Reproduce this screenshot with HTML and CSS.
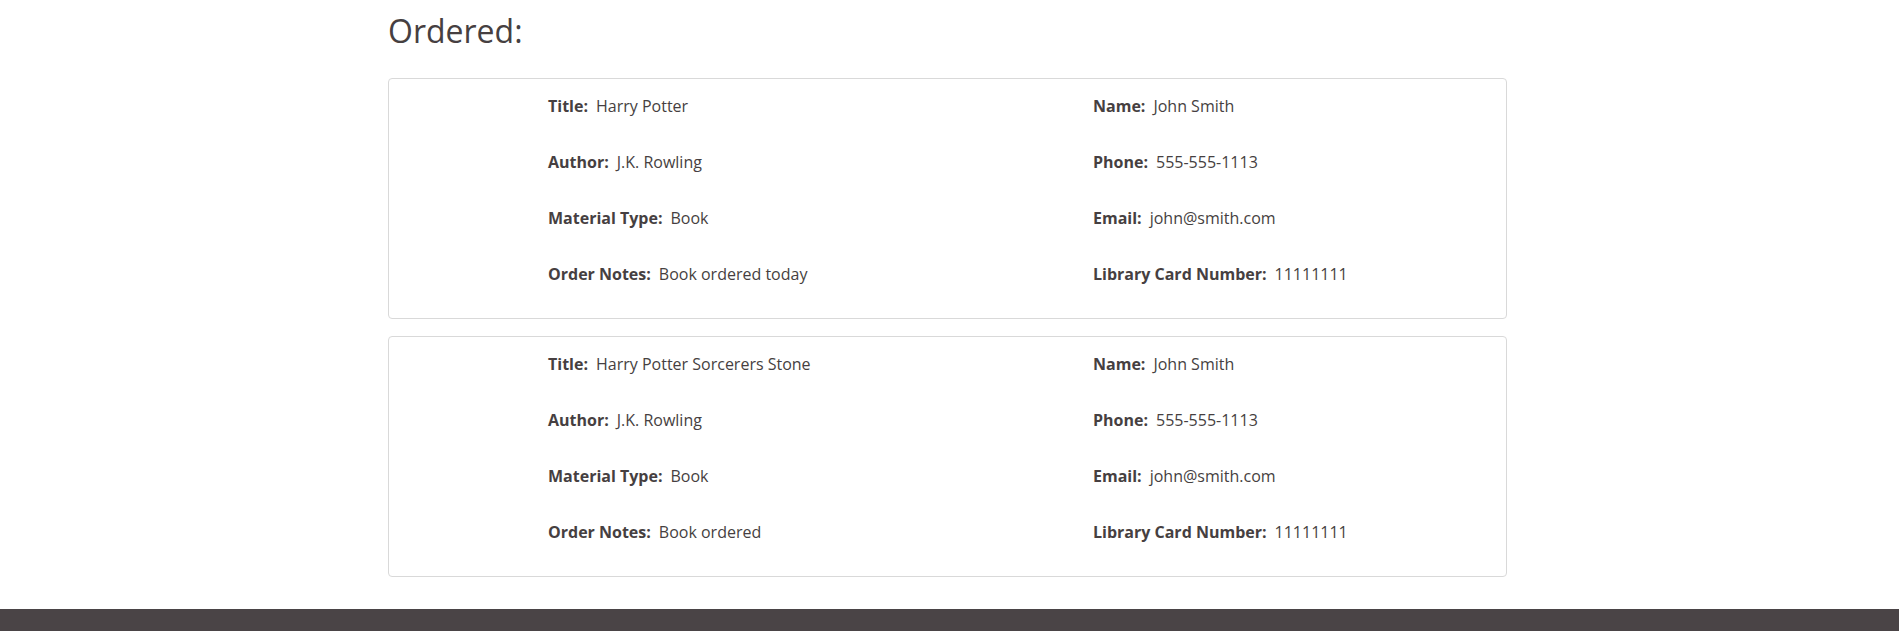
FILE: index.html
```html
<!DOCTYPE html>
<html lang="en">
<head>
<meta charset="utf-8">
<title>Ordered</title>
<link rel="stylesheet" href="styles.css">
</head>
<body>
<main class="orders">
  <h2 class="orders__title">Ordered:</h2>

  <section class="order-card">
    <div class="order-card__col">
      <p class="field"><span class="field__label">Title:</span>Harry Potter</p>
      <p class="field"><span class="field__label">Author:</span>J.K. Rowling</p>
      <p class="field"><span class="field__label">Material Type:</span>Book</p>
      <p class="field"><span class="field__label">Order Notes:</span>Book ordered today</p>
    </div>
    <div class="order-card__col">
      <p class="field"><span class="field__label">Name:</span>John Smith</p>
      <p class="field"><span class="field__label">Phone:</span>555-555-1113</p>
      <p class="field"><span class="field__label">Email:</span>john@smith.com</p>
      <p class="field"><span class="field__label">Library Card Number:</span>11111111</p>
    </div>
  </section>

  <section class="order-card">
    <div class="order-card__col">
      <p class="field"><span class="field__label">Title:</span>Harry Potter Sorcerers Stone</p>
      <p class="field"><span class="field__label">Author:</span>J.K. Rowling</p>
      <p class="field"><span class="field__label">Material Type:</span>Book</p>
      <p class="field"><span class="field__label">Order Notes:</span>Book ordered</p>
    </div>
    <div class="order-card__col">
      <p class="field"><span class="field__label">Name:</span>John Smith</p>
      <p class="field"><span class="field__label">Phone:</span>555-555-1113</p>
      <p class="field"><span class="field__label">Email:</span>john@smith.com</p>
      <p class="field"><span class="field__label">Library Card Number:</span>11111111</p>
    </div>
  </section>
</main>
<footer class="site-footer"></footer>
</body>
</html>
```

FILE: styles.css
```css
html, body {
  margin: 0;
  padding: 0;
  background: #ffffff;
}

body {
  font-family: "Open Sans", "Noto Sans", sans-serif;
  font-size: 16px;
  line-height: 24px;
  color: #463f41;
}

.orders {
  width: 1119px;
  margin-left: calc(50% - 561.5px);
  padding: 12px 0 32px;
}

.orders__title {
  margin: 0 0 28px;
  font-size: 32px;
  line-height: 38px;
  font-weight: 400;
  color: #463f41;
}

.order-card {
  display: grid;
  grid-template-columns: 545px 1fr;
  padding: 15px 0 0 159px;
  margin-bottom: 17px;
  border: 1px solid #d9d9d9;
  border-radius: 4px;
}

.order-card:last-child {
  margin-bottom: 0;
}

.field {
  margin: 0 0 32px;
  line-height: 24px;
}

.field__label {
  font-weight: 700;
  margin-right: 0.5em;
}

.site-footer {
  height: 120px;
  background: #4a4446;
}
```
